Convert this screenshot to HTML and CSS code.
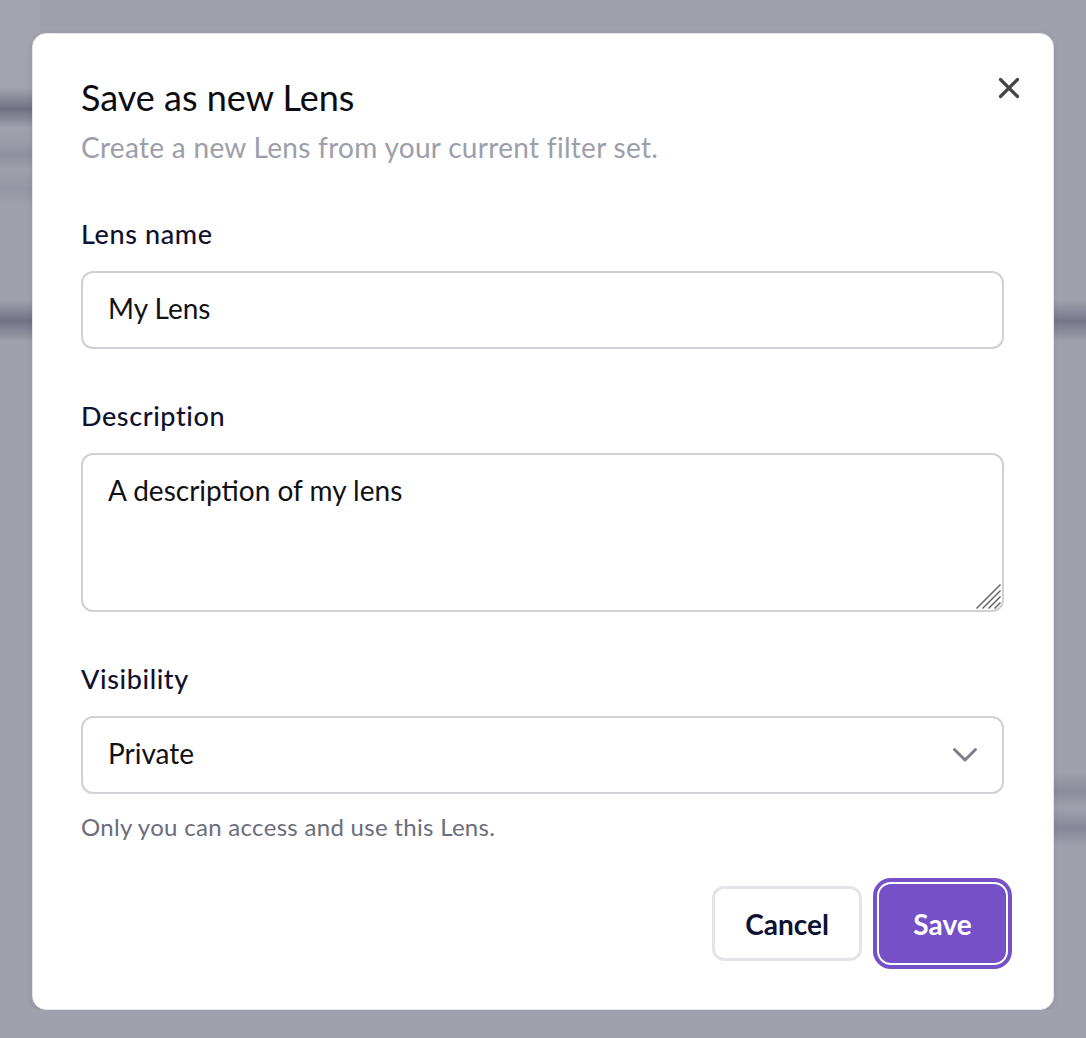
FILE: index.html
```html
<!DOCTYPE html>
<html lang="en">
<head>
<meta charset="utf-8">
<title>Save as new Lens</title>
<link rel="stylesheet" href="styles.css">
</head>
<body>
<div class="modal" role="dialog" aria-labelledby="modal-title">
  <button class="close" type="button" aria-label="Close">
    <svg width="24" height="24" viewBox="0 0 24 24" aria-hidden="true">
      <path d="M3.5 3.5 L20.5 20.5 M20.5 3.5 L3.5 20.5" stroke="#464649" stroke-width="3.2" stroke-linecap="round" fill="none"/>
    </svg>
  </button>
  <header class="modal-header">
    <h1 id="modal-title" class="title">Save as new Lens</h1>
    <p class="subtitle">Create a new Lens from your current filter set.</p>
  </header>
  <form class="form">
    <div class="field">
      <label class="label" for="lens-name">Lens name</label>
      <input class="control input" id="lens-name" type="text" value="My Lens">
    </div>
    <div class="field">
      <label class="label" for="lens-desc">Description</label>
      <div class="textarea-wrap">
        <textarea class="control textarea" id="lens-desc">A description of my lens</textarea>
        <svg class="grip" width="26" height="26" viewBox="0 0 26 26" aria-hidden="true">
          <path d="M2 25 L25 2 M8 25 L25 8 M14 25 L25 14 M20 25 L25 20" stroke="#6e6e72" stroke-width="1.7" stroke-linecap="round" fill="none"/>
        </svg>
      </div>
    </div>
    <div class="field">
      <label class="label" for="lens-vis">Visibility</label>
      <div class="select-wrap">
        <select class="control select" id="lens-vis">
          <option>Private</option>
          <option>Public</option>
        </select>
        <svg class="chevron" width="26" height="17" viewBox="0 0 26 17" aria-hidden="true">
          <path d="M2.5 2.5 L13 13 L23.5 2.5" stroke="#7b7d8b" stroke-width="3" stroke-linecap="round" stroke-linejoin="round" fill="none"/>
        </svg>
      </div>
      <p class="help">Only you can access and use this Lens.</p>
    </div>
    <div class="actions">
      <button class="btn btn-cancel" type="button">Cancel</button>
      <button class="btn btn-save" type="submit">Save</button>
    </div>
  </form>
</div>
</body>
</html>
```
FILE: styles.css
```css
html {
  background-color: #a0a1ac;
  background-image:
    linear-gradient(to bottom,
      #a3a4ae 0px, #a2a3ae 88px, #6f7083 109px, #a0a1ac 128px,
      #9d9eaa 140px, #8f909e 155px, #a0a1ac 170px, #9496a3 189px, #a0a1ac 205px,
      #a0a1ac 300px, #717285 321px, #a0a1ac 342px, #a0a1ac 100%),
    linear-gradient(to bottom,
      #a0a1ac 0px, #a0a1ac 300px, #76778a 321px, #a0a1ac 342px,
      #a0a1ac 772px, #8b8c9a 791px, #a0a1ac 808px, #85869a 828px, #a0a1ac 846px, #a0a1ac 100%);
  background-size: 40px 1038px, 40px 1038px;
  background-position: left top, right top;
  background-repeat: no-repeat;
  min-height: 1038px;
}

body {
  margin: 0;
  padding: 33px 0 0 32px;
  font-family: Lato, "Noto Sans", sans-serif;
  color: #10112f;
}

.modal {
  position: relative;
  box-sizing: border-box;
  width: 1022px;
  background: #ffffff;
  border: 1px solid #e4e4e9;
  border-radius: 14px;
  box-shadow: 0 2px 6px rgba(40, 40, 60, 0.12);
  padding: 41px 49px 46px 48px;
}

.close {
  position: absolute;
  top: 42px;
  right: 32px;
  width: 24px;
  height: 24px;
  padding: 0;
  border: 0;
  background: none;
  cursor: pointer;
  display: flex;
}

.modal-header {
  display: flex;
  flex-direction: column;
  gap: 10px;
}

.title {
  margin: 0;
  font-size: 36px;
  line-height: 44px;
  font-weight: 400;
  color: #0b0b10;
}

.subtitle {
  margin: 0;
  font-size: 28px;
  line-height: 36px;
  letter-spacing: 0.3px;
  color: #9c9eab;
}

.form {
  margin-top: 53px;
  display: flex;
  flex-direction: column;
  gap: 51px;
}

.field {
  display: flex;
  flex-direction: column;
  gap: 21px;
}

.label {
  font-size: 27px;
  line-height: 32px;
  letter-spacing: 0.6px;
  color: #10112f;
  font-weight: 500;
}

.control {
  box-sizing: border-box;
  width: 100%;
  margin: 0;
  font-family: inherit;
  font-size: 28px;
  line-height: 36px;
  color: #111114;
  background: #ffffff;
  border: 2px solid #d0d0d7;
  border-radius: 12px;
  outline: none;
}

.input {
  height: 78px;
  padding: 17px 25px 21px;
}

.textarea-wrap {
  position: relative;
}

.textarea {
  height: 159px;
  padding: 17px 25px;
  resize: none;
  display: block;
}

.grip {
  position: absolute;
  right: 3px;
  bottom: 3px;
  pointer-events: none;
}

.select-wrap {
  position: relative;
}

.select {
  height: 78px;
  padding: 17px 25px 21px;
  appearance: none;
  -webkit-appearance: none;
  display: block;
}

.chevron {
  position: absolute;
  right: 26px;
  top: 31px;
  pointer-events: none;
}

.help {
  margin: -4px 0 0;
  font-size: 24px;
  line-height: 32px;
  letter-spacing: 0.3px;
  color: #6b6d7c;
}

.actions {
  margin-top: -10px;
  display: flex;
  justify-content: flex-end;
  align-items: center;
  gap: 17px;
}

.btn {
  box-sizing: border-box;
  font-family: inherit;
  font-size: 28px;
  font-weight: 700;
  border-radius: 12px;
  padding: 0;
  cursor: pointer;
}

.btn-cancel {
  width: 150px;
  height: 75px;
  background: #ffffff;
  color: #0e1130;
  border: 3px solid #e3e4e8;
}

.btn-save {
  width: 127px;
  height: 79px;
  margin-right: -2px;
  background: #7650c7;
  color: #ffffff;
  border: 0;
  box-shadow: 0 0 0 2px #ffffff, 0 0 0 6px #7650c7;
}
```
